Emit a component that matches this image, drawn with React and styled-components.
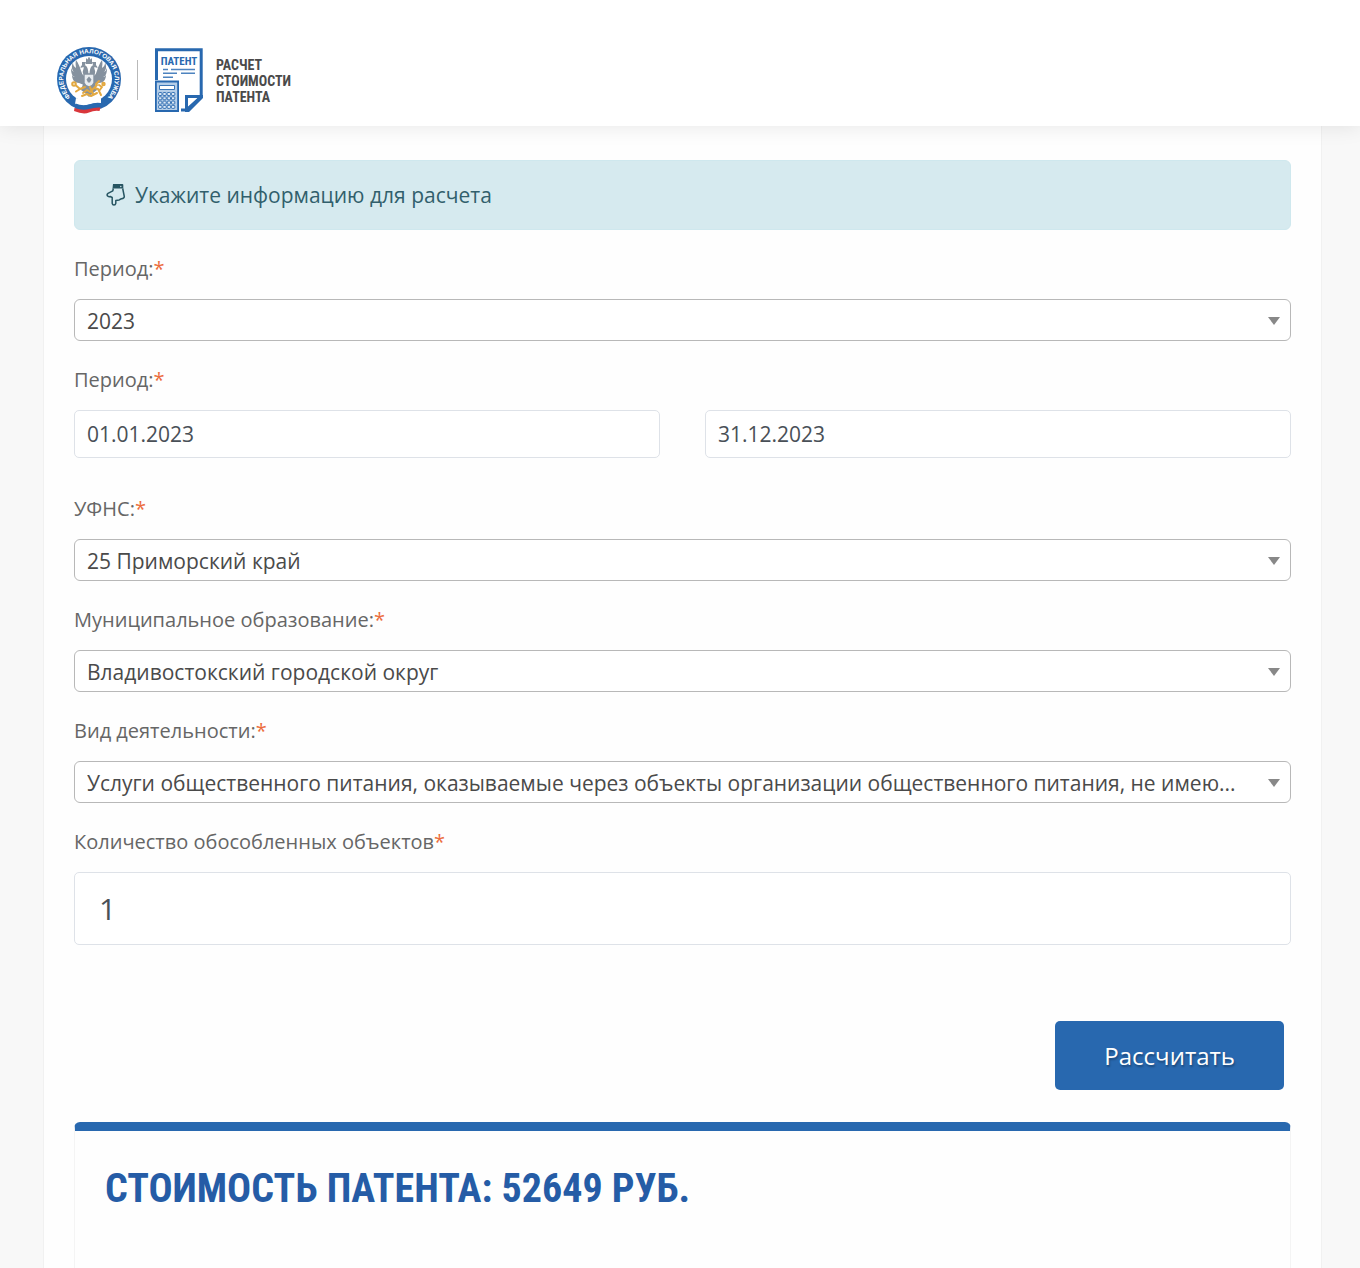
import React from "react";
import styled, { createGlobalStyle } from "styled-components";

const narrow = `"Roboto Condensed", "Liberation Sans Narrow", "DejaVu Sans Condensed", sans-serif`;

const GlobalStyle = createGlobalStyle`
  *, *::before, *::after { box-sizing: border-box; }
  body {
    margin: 0;
    background: #f8f8f8;
    color: #495057;
    font-family: "Open Sans", "Noto Sans", sans-serif;
    font-size: 21px;
    line-height: 32px;
  }
`;

const Page = styled.div`
  display: flex;
  flex-direction: column;
  min-height: 100vh;
  overflow: hidden;
`;

const Header = styled.header`
  position: relative;
  z-index: 1;
  display: flex;
  align-items: flex-start;
  height: 126px;
  padding: 46px 56px 0;
  background: #fff;
  box-shadow: 0 0 20px rgba(0, 0, 0, 0.1);
`;

const Divider = styled.span`
  width: 1px;
  height: 40px;
  margin: 14px 17px 0 15px;
  background: #b9b9b9;
`;

const Brand = styled.a`
  display: flex;
  align-items: flex-start;
  gap: 13px;
  padding-top: 2px;
  color: #4a4a4a;
  text-decoration: none;
`;

const BrandName = styled.span`
  display: flex;
  flex-direction: column;
  padding-top: 9px;
  font: bold 14px/16px ${narrow};
  text-transform: uppercase;
`;

const Card = styled.main`
  flex: 1;
  margin: 0 38px 0 43px;
  padding: 34px 30px 0;
  border: 1px solid #f1f1f1;
  border-width: 0 1px;
  background: #fefefe;
`;

const Form = styled.form`
  display: flex;
  flex-direction: column;
  gap: 25px;
`;

const Notice = styled.div`
  display: flex;
  align-items: center;
  gap: 9px;
  height: 70px;
  padding: 0 31px;
  border: 1px solid #cfe8ee;
  border-radius: 6px;
  background: #d6eaef;
  color: #315f6c;
`;

const Field = styled.div`
  display: flex;
  flex-direction: column;
  gap: 16px;
  min-width: 0;
`;

const Label = styled.label`
  color: #666;
  font-size: 20px;
  line-height: 28px;
`;

const Required = styled.span`
  color: #ec6d3d;
`;

const SelectBox = styled.div`
  position: relative;

  &::after {
    content: "";
    position: absolute;
    top: 18px;
    right: 11px;
    border: solid transparent;
    border-width: 8px 6px 0;
    border-top-color: #888;
    pointer-events: none;
  }
`;

const Select = styled.select`
  display: block;
  width: 100%;
  height: 42px;
  padding: 2px 40px 0 12px;
  border: 1px solid #b8b8b8;
  border-radius: 6px;
  background: #fff;
  color: #4a4a4a;
  font: inherit;
  text-overflow: ellipsis;
  appearance: none;
`;

const DateRow = styled.div`
  display: grid;
  grid-template-columns: 1fr 1fr;
  gap: 45px;
  margin-bottom: 12px;
`;

const Input = styled.input`
  width: 100%;
  height: ${(p) => (p.$large ? "73px" : "48px")};
  padding: ${(p) => (p.$large ? "0 24px" : "0 12px")};
  border: 1px solid #dee2e8;
  border-radius: 5px;
  background: #fff;
  color: #495057;
  font-family: inherit;
  font-size: ${(p) => (p.$large ? "30px" : "21px")};
`;

const Actions = styled.div`
  display: flex;
  justify-content: flex-end;
  padding: 76px 7px 32px;
`;

const Button = styled.button`
  height: 69px;
  padding: 0 49px;
  border: 0;
  border-radius: 5px;
  background: #2868af;
  color: #fff;
  font: 24px/32px "Open Sans", "Noto Sans", sans-serif;
  text-shadow: 1px 2px 2px rgba(0, 0, 0, 0.3);
`;

const Result = styled.section`
  min-height: 180px;
  padding: 34px 30px;
  border: 1px solid #f4f4f4;
  border-top: 9px solid #2868af;
  border-radius: 6px 6px 0 0;
`;

const ResultTitle = styled.h2`
  margin: 0;
  color: #255ca6;
  font: bold 40px/48px ${narrow};
  text-transform: uppercase;
`;

function Seal() {
  return (
    <svg width="66" height="68" viewBox="0 0 66 68" role="img" aria-label="ФНС России">
      <defs>
        <path id="ring" d="M14 50.500A25.800 25.800 0 1 1 52 50.500" />
      </defs>
      <circle cx="33" cy="33" r="32" fill="#2868af" />
      <circle cx="33" cy="33" r="23" fill="#fff" />
      <text fill="#fff" fontFamily="Liberation Sans, sans-serif" fontWeight="bold" fontSize="6.300">
        <textPath href="#ring" startOffset="50%" textAnchor="middle">ФЕДЕРАЛЬНАЯ НАЛОГОВАЯ СЛУЖБА</textPath>
      </text>
      <g fill="#85919e">
        <path d="M28 30C25 28 25 21 20 14c-1 4 0 6 0 8-3-2-3-4-3-6-2 5-1 8 1 10-2-1-2-2-3-4 0 5 1 8 4 9-2 0-2-1-3-2 0 5 3 8 7 8l5 2z" />
        <path d="M38 30c3-2 3-9 8-16 1 4 0 6 0 8 3-2 3-4 3-6 2 5 1 8-1 10 2-1 2-2 3-4 0 5-1 8-4 9 2 0 2-1 3-2 0 5-3 8-7 8l-5 2z" />
        <path d="M32.500 29c0-5-1-9-4-10-2-1-4 1-4 3l3-1c1 2-2 4 0 7l3 4zM33.500 29c0-5 1-9 4-10 2-1 4 1 4 3l-3-1c-1 2 2 4 0 7l-3 4z" />
        <path d="M30 12l1.500 1.500L33 10.500l1.500 3L36 12v6h-6zM26 16h4l-1 3h-3zM36 16h4v3h-3z" />
        <path d="M27 38h12l2 6-4 3-4 4-4-4-4-3z" />
      </g>
      <path d="M28 28h10v9q-1 3-5 4-4-1-5-4z" fill="#e8ecf0" stroke="#85919e" strokeWidth="1.400" />
      <path d="M33 30.500l2.500 3-1.500 3h-2l-1.500-3z" fill="#85919e" />
      <g fill="none" stroke="#e2a840" strokeWidth="2" strokeLinecap="round" strokeLinejoin="round">
        <circle cx="18" cy="38" r="1.800" />
        <path d="M20 39.500l4 3.500 5-2M24 43l-4 2.500M27 47l4-3 3 2 4-4 3-3M26 50l5-2 4 2 6-3M34 41l3 7M38 42l4 1 3 6M40 38l3-3M43 39l3 2-3 4" />
        <circle cx="47.500" cy="38" r="1.200" />
      </g>
      <path d="M20 52q7 3 13 1t12-1v5q-6-1-12 1.500t-14-.5z" fill="#fff" />
      <path d="M19.500 57.500q7 3 13.500 1t11.800-1.500v4.500q-6-1-12 1.500t-14-.5z" fill="#2868af" />
      <path d="M18.500 62q8 3 14.500 1t11.500-1.500L43.500 65q-5-1-10.500 1.500t-15-1.500z" fill="#d9363b" />
    </svg>
  );
}

function PatentIcon() {
  return (
    <svg width="48" height="64" viewBox="0 0 48 64" aria-hidden="true">
      <path d="M1.500 32V1.700h44.700V48.500L31.500 62H26" fill="none" stroke="#2868af" strokeWidth="3" />
      <path d="M30 64V47h18v3L34 64zM33 50v9l10-9z" fill="#2868af" fillRule="evenodd" />
      <text x="24" y="17" textAnchor="middle" fill="#2868af" fontFamily={narrow} fontWeight="bold" fontSize="11">ПАТЕНТ</text>
      <path d="M8 21.500h5m3 0h24M8 25.200h14m4 0h14M8 29.200h10" stroke="#4d83bf" strokeWidth="1.400" />
      <path d="M0 32.500h24V64H0z" fill="#2868af" />
      <path d="M1.800 34.500h20.400v27.500H1.800z" fill="#b5cee8" />
      <path d="M4.500 37.500h15v4h-15z" fill="#fff" stroke="#2868af" strokeWidth=".9" />
      <g fill="#dce8f4" stroke="#2868af" strokeWidth=".9">
        {[44.5, 48.8, 53.1, 57.4].map((y) =>
          [3.6, 7.9, 12.2, 16.5].map((x) => <rect key={`${x}-${y}`} x={x} y={y} width="3.300" height="3" rx=".8" />)
        )}
      </g>
    </svg>
  );
}

function HandDown() {
  return (
    <svg width="20" height="22" viewBox="0 0 20 22" aria-hidden="true">
      <path d="M7 0h9.500q.8 0 .8 1v3.500H6.500z" fill="#275562" />
      <circle cx="14.800" cy="2.500" r=".7" fill="#d6eaef" />
      <path
        d="M7.300 4.500L6.800 6.800 2 9.300Q.6 10.300 1.400 11.800 2.300 13 4.200 12.500L6.200 13.500V19.300q.3 1.700 1.800 1.700t1.800-1.700V16.500l3.400-.5q1-.8 2.300-1.200 2.800-.4 2.800-2.300L16.700 4.500"
        fill="none"
        stroke="#275562"
        strokeWidth="1.500"
        strokeLinejoin="round"
      />
    </svg>
  );
}

function FieldLabel({ htmlFor, children }) {
  return (
    <Label htmlFor={htmlFor}>
      {children}
      <Required>*</Required>
    </Label>
  );
}

function SelectField({ id, label, value }) {
  return (
    <Field>
      <FieldLabel htmlFor={id}>{label}</FieldLabel>
      <SelectBox>
        <Select id={id} name={id}>
          <option>{value}</option>
        </Select>
      </SelectBox>
    </Field>
  );
}

export default function App() {
  return (
    <Page>
      <GlobalStyle />
      <Header>
        <Seal />
        <Divider />
        <Brand href="#">
          <PatentIcon />
          <BrandName>
            <span>Расчет</span>
            <span>стоимости</span>
            <span>патента</span>
          </BrandName>
        </Brand>
      </Header>
      <Card>
        <Form onSubmit={(e) => e.preventDefault()}>
          <Notice>
            <HandDown />
            <span>Укажите информацию для расчета</span>
          </Notice>
          <SelectField id="year" label="Период:" value="2023" />
          <Field>
            <FieldLabel htmlFor="date-from">Период:</FieldLabel>
            <DateRow>
              <Input id="date-from" defaultValue="01.01.2023" />
              <Input id="date-to" aria-label="Конец периода" defaultValue="31.12.2023" />
            </DateRow>
          </Field>
          <SelectField id="ufns" label="УФНС:" value="25 Приморский край" />
          <SelectField id="municipality" label="Муниципальное образование:" value="Владивостокский городской округ" />
          <SelectField
            id="activity"
            label="Вид деятельности:"
            value="Услуги общественного питания, оказываемые через объекты организации общественного питания, не имею..."
          />
          <Field>
            <FieldLabel htmlFor="count">Количество обособленных объектов</FieldLabel>
            <Input id="count" $large inputMode="numeric" defaultValue="1" />
          </Field>
        </Form>
        <Actions>
          <Button type="button">Рассчитать</Button>
        </Actions>
        <Result>
          <ResultTitle>Стоимость патента: 52649 руб.</ResultTitle>
        </Result>
      </Card>
    </Page>
  );
}
